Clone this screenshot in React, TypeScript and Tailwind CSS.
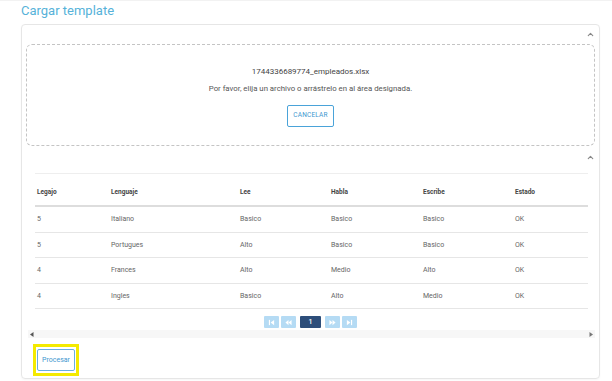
import { ChevronUp } from 'lucide-react';

const rows = [
  { legajo: '5', lenguaje: 'Italiano', lee: 'Basico', habla: 'Basico', escribe: 'Basico', estado: 'OK' },
  { legajo: '5', lenguaje: 'Portugues', lee: 'Alto', habla: 'Basico', escribe: 'Basico', estado: 'OK' },
  { legajo: '4', lenguaje: 'Frances', lee: 'Alto', habla: 'Medio', escribe: 'Alto', estado: 'OK' },
  { legajo: '4', lenguaje: 'Ingles', lee: 'Basico', habla: 'Alto', escribe: 'Medio', estado: 'OK' },
];

const headers = ['Legajo', 'Lenguaje', 'Lee', 'Habla', 'Escribe', 'Estado'];
// column widths so the text lands on the same x as the screenshot
const cols = 'grid grid-cols-[74px_129px_91px_92px_92px_1fr]';

const PageBtn = ({ children, active }: { children: React.ReactNode; active?: boolean }) => (
  <div
    className={`h-[12px] flex items-center justify-center rounded-[1px] ${
      active ? 'w-[21px] bg-[#2d4e7a] text-white' : 'w-[15px] bg-[#b5dbf4] text-white'
    }`}
  >
    {children}
  </div>
);

const App = () => {
  return (
    <div className="w-[612px] h-[381px] bg-white border-t border-[#f2f2f2] font-['Roboto',sans-serif] overflow-hidden">
      <div className="pl-[21px] pr-[12px]">
        {/* Titulo */}
        <h1 className="h-[23px] pt-[1px] text-[13px] leading-[18px] text-[#56b2d9]">Cargar template</h1>

        {/* Card principal */}
        <div className="h-[355px] border border-[#e6e6e6] rounded-[4px] shadow-[0_1px_2px_rgba(0,0,0,0.04)] flex flex-col">
          <div className="h-[19px] flex items-center justify-end pr-[4px]">
            <ChevronUp size={9} strokeWidth={3} className="text-[#888]" />
          </div>

          {/* Zona de carga */}
          <div className="mx-[4px] h-[102px] border border-dashed border-[#c4c4c4] rounded-[6px] flex flex-col items-center pt-[22px]">
            <p className="text-[8px] leading-[10px] text-[#444]">1744336689774_empleados.xlsx</p>
            <p className="mt-[7px] text-[7.8px] leading-[10px] text-[#555]">
              Por favor, elija un archivo o arrástrelo en al área designada.
            </p>
            <button className="mt-[11px] w-[47px] h-[22px] border border-[#4aa3d9] rounded-[2px] text-[6.5px] text-[#3f97cf] tracking-[0.2px]">
              CANCELAR
            </button>
          </div>

          <div className="h-[22px] flex items-center justify-end pr-[4px]">
            <ChevronUp size={9} strokeWidth={3} className="text-[#888]" />
          </div>

          {/* Tabla */}
          <div className="ml-[6px] mr-[4px] mt-[5px]">
            <div className="px-[7px]">
              <div className={`${cols} h-[34px] border-t border-[#eeeeee] border-b-2 border-b-[#dddddd] items-end pb-[8px] pl-[2px]`}>
                {headers.map((h) => (
                  <span key={h} className="text-[6.5px] leading-[9px] font-bold text-[#444]">
                    {h}
                  </span>
                ))}
              </div>
              {rows.map((r, i) => (
                <div
                  key={i}
                  className={`${cols} h-[25.6px] border-b border-[#e6e6e6] items-center pl-[2px] text-[7px] text-[#666]`}
                >
                  <span>{r.legajo}</span>
                  <span>{r.lenguaje}</span>
                  <span>{r.lee}</span>
                  <span>{r.habla}</span>
                  <span>{r.escribe}</span>
                  <span>{r.estado}</span>
                </div>
              ))}

              {/* Paginacion */}
              <div className="flex items-center justify-center mt-[7px] h-[12px] pr-[2px]">
                <div className="flex gap-[2px]">
                  <PageBtn>
                    <svg width="7" height="7" viewBox="0 0 8 8" fill="currentColor">
                      <rect x="1" y="1" width="1.3" height="6" />
                      <path d="M7 1 L3 4 L7 7 Z" />
                    </svg>
                  </PageBtn>
                  <PageBtn>
                    <svg width="7" height="7" viewBox="0 0 8 8" fill="currentColor">
                      <path d="M4 1 L0.5 4 L4 7 Z" />
                      <path d="M7.5 1 L4 4 L7.5 7 Z" />
                    </svg>
                  </PageBtn>
                </div>
                <div className="mx-[4px]">
                  <PageBtn active>
                    <span className="text-[7px] leading-none font-medium">1</span>
                  </PageBtn>
                </div>
                <div className="flex gap-[2px]">
                  <PageBtn>
                    <svg width="7" height="7" viewBox="0 0 8 8" fill="currentColor">
                      <path d="M0.5 1 L4 4 L0.5 7 Z" />
                      <path d="M4 1 L7.5 4 L4 7 Z" />
                    </svg>
                  </PageBtn>
                  <PageBtn>
                    <svg width="7" height="7" viewBox="0 0 8 8" fill="currentColor">
                      <path d="M1 1 L5 4 L1 7 Z" />
                      <rect x="5.7" y="1" width="1.3" height="6" />
                    </svg>
                  </PageBtn>
                </div>
              </div>
            </div>

            {/* Barra de scroll horizontal */}
            <div className="mt-[2px] h-[8px] bg-[#f7f7f7] flex items-center justify-between px-[2px]">
              <svg width="4" height="5" viewBox="0 0 4 5" fill="#555">
                <path d="M3.5 0 L0 2.5 L3.5 5 Z" />
              </svg>
              <svg width="4" height="5" viewBox="0 0 4 5" fill="#777">
                <path d="M0.5 0 L4 2.5 L0.5 5 Z" />
              </svg>
            </div>
          </div>

          {/* Boton procesar */}
          <div className="mt-[6px] ml-[11px]">
            <div className="inline-flex border-[3px] border-[#f4ea00] p-[2px_1px]">
              <button className="w-[38px] h-[22px] border border-[#6aaede] rounded-[2px] text-[7px] text-[#3f97cf]">
                Procesar
              </button>
            </div>
          </div>
        </div>
      </div>
    </div>
  );
};

export default App;
